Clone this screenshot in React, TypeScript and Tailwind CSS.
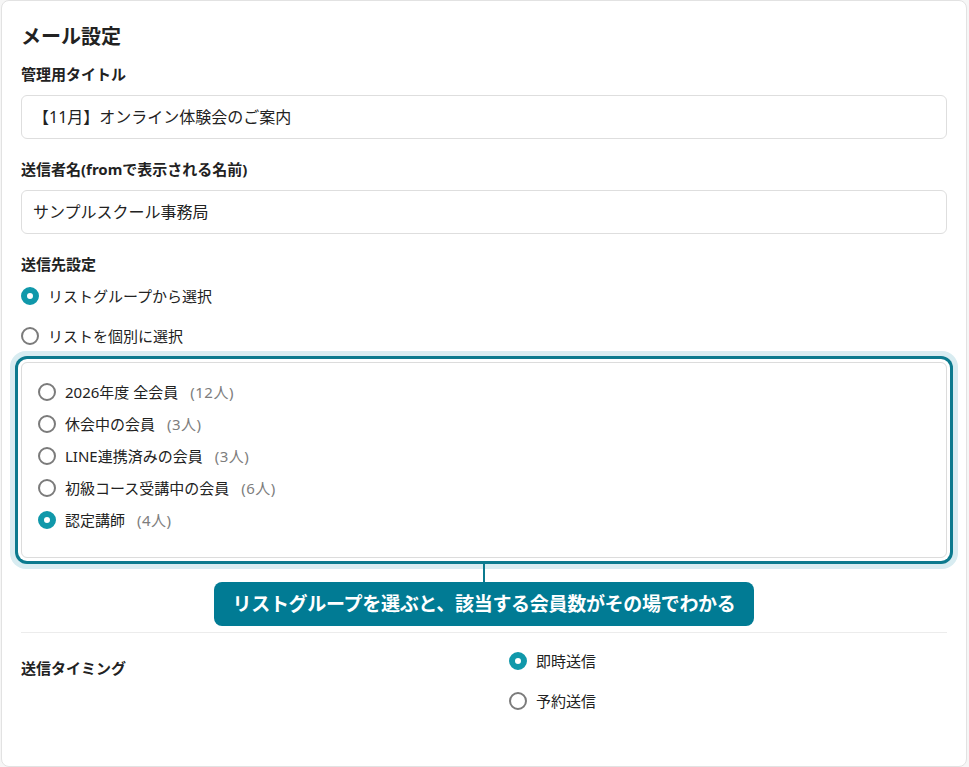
import React from "react";

type Group = { name: string; count: number };

const groups: Group[] = [
  { name: "2026年度 全会員", count: 12 },
  { name: "休会中の会員", count: 3 },
  { name: "LINE連携済みの会員", count: 3 },
  { name: "初級コース受講中の会員", count: 6 },
  { name: "認定講師", count: 4 },
];

function Radio({ checked }: { checked?: boolean }) {
  return checked ? (
    <span className="block h-[18px] w-[18px] shrink-0 rounded-full border-[6px] border-[#1098aa] bg-white" />
  ) : (
    <span className="block h-[18px] w-[18px] shrink-0 rounded-full border-2 border-[#7b7b7b] bg-white" />
  );
}

function Option({ label, checked, extra }: { label: string; checked?: boolean; extra?: string }) {
  return (
    <label className="flex h-[22px] items-center gap-[9px] text-[15px] leading-[22px] text-[#222]">
      <Radio checked={checked} />
      <span>
        {label}
        {extra && <span className="ml-3 tracking-[0.5px] text-[#7d7d7d]">{extra}</span>}
      </span>
    </label>
  );
}

function Field({ label, value }: { label: string; value: string }) {
  return (
    <div className="flex flex-col">
      <p className="text-[15px] font-bold leading-[22px] text-[#222]">{label}</p>
      <div className="mt-[10px] flex h-[44px] items-center rounded-md border border-[#dedede] bg-white px-[11px] text-[16px] text-[#222]">
        {value}
      </div>
    </div>
  );
}

export default function App() {
  return (
    <div className="min-h-screen bg-[#f6f6f6] font-['Noto_Sans','Noto_Sans_CJK_JP',sans-serif]">
      <div className="ml-[1px] flex h-[767px] w-[966px] flex-col rounded-lg border border-[#e2e2e2] bg-white px-[19px] pt-[22px]">
        <h1 className="text-[20px] font-bold leading-[28px] text-[#222]">メール設定</h1>

        <div className="mt-3">
          <Field label="管理用タイトル" value="【11月】オンライン体験会のご案内" />
        </div>
        <div className="mt-[19px]">
          <Field label="送信者名(fromで表示される名前)" value="サンプルスクール事務局" />
        </div>

        {/* recipients */}
        <p className="mt-[19px] text-[15px] font-bold leading-[22px] text-[#222]">送信先設定</p>
        <div className="mt-[10px] flex flex-col gap-[18px]">
          <Option label="リストグループから選択" checked />
          <Option label="リストを個別に選択" />
        </div>

        <div className="mt-[15px] flex flex-col gap-[10px] rounded-md border border-[#dcdcdc] bg-white px-4 pb-[26px] pt-[18px] shadow-[0_0_0_3px_#fff,0_0_0_6px_#0b7a8e,0_0_0_11px_#d8ecf1]">
          {groups.map((g, i) => (
            <Option key={g.name} label={g.name} extra={`(${g.count}人)`} checked={i === groups.length - 1} />
          ))}
        </div>

        {/* note */}
        <div className="flex flex-col items-center">
          <div className="mt-[5px] h-[19px] w-[2px] bg-[#0b7a8e]" />
          <div className="flex h-[44px] w-[540px] items-center justify-center rounded-lg bg-[#017b94] text-[19px] font-bold tracking-[-0.3px] text-white">
            リストグループを選ぶと、該当する会員数がその場でわかる
          </div>
        </div>

        <div className="mt-[6px] border-t border-[#ececec]" />

        {/* timing */}
        <div className="grid grid-cols-[488px_1fr] pt-[17px]">
          <p className="mt-[7px] text-[15px] font-bold leading-[22px] text-[#222]">送信タイミング</p>
          <div className="flex flex-col gap-[18px]">
            <Option label="即時送信" checked />
            <Option label="予約送信" />
          </div>
        </div>
      </div>
    </div>
  );
}
